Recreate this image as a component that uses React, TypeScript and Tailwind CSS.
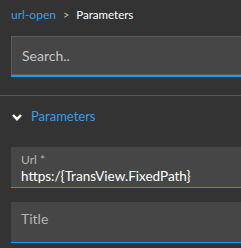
export default function App() {
  return (
    <div className="w-full h-[248px] overflow-hidden bg-[#333333] font-['Lato','Open_Sans',sans-serif]">
      {/* breadcrumb */}
      <div className="flex items-center pl-[11px] pt-[7px] h-[23px] text-[12px] leading-4">
        <span className="text-[#3a9ee4]">url-open</span>
        <span className="mx-[7px] text-[#bdbdbd] text-[11px]">&gt;</span>
        <span className="text-white text-[11.5px]">Parameters</span>
      </div>

      {/* search */}
      <div className="mt-[13px] ml-[11px] w-[260px] border-b-2 border-[#1e9be6]">
        <div className="h-[39px] flex items-center pl-[10px] border border-[#5c5c5c] bg-[#464646] text-[14px] text-[#c4c4c4]">
          Search..
        </div>
      </div>

      <div className="mt-[18px] border-t border-[#575757]" />

      {/* section header */}
      <div className="flex items-center h-[20px] mt-[11px] pl-[12px] gap-[9px]">
        <svg width="10" height="7" viewBox="0 0 10 7" className="shrink-0">
          <polyline points="1,1 5,5.2 9,1" fill="none" stroke="#ffffff" strokeWidth="2.5" />
        </svg>
        <span className="text-[13px] text-[#3a9ee4]">Parameters</span>
      </div>

      {/* Url field */}
      <div className="mt-[20px] ml-[11px] w-[260px] h-[41px] bg-[#464646] border-b border-[#1e9be6] pl-[10px] pt-[6px]">
        <div className="text-[12px] leading-[14px] text-[#b4b4b4]">Url *</div>
        <div className="text-[13.5px] leading-[18px] text-white">https:/{"{TransView.FixedPath}"}</div>
      </div>

      {/* Title field */}
      <div className="mt-[14px] ml-[11px] w-[260px] h-[41px] bg-[#464646] border-b border-[#1e9be6] pl-[10px] pt-[7px]">
        <div className="text-[14px] leading-5 text-[#b4b4b4]">Title</div>
      </div>
    </div>
  );
}
